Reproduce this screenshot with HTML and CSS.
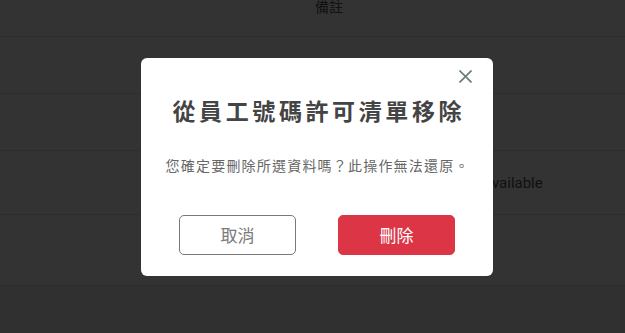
FILE: index.html
```html
<!DOCTYPE html>
<html lang="zh-Hant">
<head>
<meta charset="utf-8">
<title>從員工號碼許可清單移除</title>
<link rel="stylesheet" href="styles.css">
</head>
<body>
<div class="page">
  <table class="data-table">
    <colgroup>
      <col class="c1"><col class="c2"><col class="c3"><col class="c4">
    </colgroup>
    <thead>
      <tr class="head-row"><th></th><th>備註</th><th></th><th></th></tr>
    </thead>
    <tbody>
      <tr class="r1"><td></td><td></td><td></td><td></td></tr>
      <tr class="r1"><td></td><td></td><td></td><td></td></tr>
      <tr class="r2"><td></td><td></td><td></td><td>Not available</td></tr>
      <tr class="r3"><td></td><td></td><td></td><td></td></tr>
    </tbody>
  </table>
</div>

<div class="backdrop">
  <div class="modal" role="dialog">
    <div class="modal-top">
      <button class="close" aria-label="關閉">
        <svg viewBox="0 0 12 12" width="13" height="13"><path d="M1 1 L11 11 M11 1 L1 11" stroke="currentColor" stroke-width="1.6" fill="none" stroke-linecap="square"/></svg>
      </button>
    </div>
    <h2 class="modal-title">從員工號碼許可清單移除</h2>
    <p class="modal-text">您確定要刪除所選資料嗎？此操作無法還原。</p>
    <div class="modal-actions">
      <button class="btn btn-cancel">取消</button>
      <button class="btn btn-delete">刪除</button>
    </div>
  </div>
</div>
</body>
</html>
```

FILE: styles.css
```css
html, body {
  margin: 0;
  padding: 0;
}
body {
  width: 625px;
  height: 333px;
  overflow: hidden;
  background: #f0f0f0;
  font-family: Roboto, "Noto Sans CJK TC", sans-serif;
}
.page {
  background: #fff;
}
.data-table {
  width: 625px;
  border-collapse: collapse;
  table-layout: fixed;
  color: #555;
  font-size: 15px;
}
.c1 { width: 260px; }
.c2 { width: 138px; }
.c3 { width: 58px; }
.c4 { width: 169px; }
.data-table th,
.data-table td {
  padding: 0;
  border-bottom: 1px solid #dedede;
}
.head-row th {
  height: 36px;
  vertical-align: top;
  font-weight: 400;
  font-size: 14px;
  line-height: 12px;
  text-align: center;
  font-family: "Noto Sans CJK TC", sans-serif;
}
.r1 td { height: 56px; }
.r2 td { height: 62px; }
.r3 td { height: 70px; }
.r2 td:last-child {
  padding-left: 0;
  padding-top: 1px;
  white-space: nowrap;
}

.backdrop {
  position: fixed;
  inset: 0;
  background: rgba(0, 0, 0, 0.8);
  display: flex;
  align-items: center;
  justify-content: center;
}
.modal {
  width: 352px;
  height: 218px;
  box-sizing: border-box;
  margin-left: 9px;
  background: #fff;
  border-radius: 6px;
  padding: 12px 22px 20px;
  display: flex;
  flex-direction: column;
  align-items: center;
  font-family: "Noto Sans CJK TC", sans-serif;
}
.modal-top {
  align-self: stretch;
  display: flex;
  justify-content: flex-end;
  height: 15px;
}
.close {
  border: 0;
  background: none;
  padding: 0;
  width: 13px;
  height: 13px;
  color: #6d7c7c;
  display: flex;
  margin-right: -1px;
}
.modal-title {
  margin: 9px 0 0;
  font-size: 23px;
  line-height: 32px;
  font-weight: 700;
  letter-spacing: 3.6px;
  color: #444;
  text-indent: 3.6px;
}
.modal-text {
  margin: 29px 0 0;
  font-size: 14px;
  line-height: 20px;
  letter-spacing: 1.2px;
  color: #666;
  text-indent: 1.2px;
}
.modal-actions {
  margin-top: 40px;
  display: flex;
  gap: 42px;
}
.btn {
  width: 117px;
  height: 40px;
  box-sizing: border-box;
  border-radius: 5px;
  font-family: "Noto Sans CJK TC", sans-serif;
  font-size: 17px;
  padding: 0;
}
.btn-cancel {
  background: #fff;
  border: 1px solid #7a7a7a;
  color: #7a7a7a;
}
.btn-delete {
  background: #dc3545;
  border: 1px solid #dc3545;
  color: #fff;
}
```
